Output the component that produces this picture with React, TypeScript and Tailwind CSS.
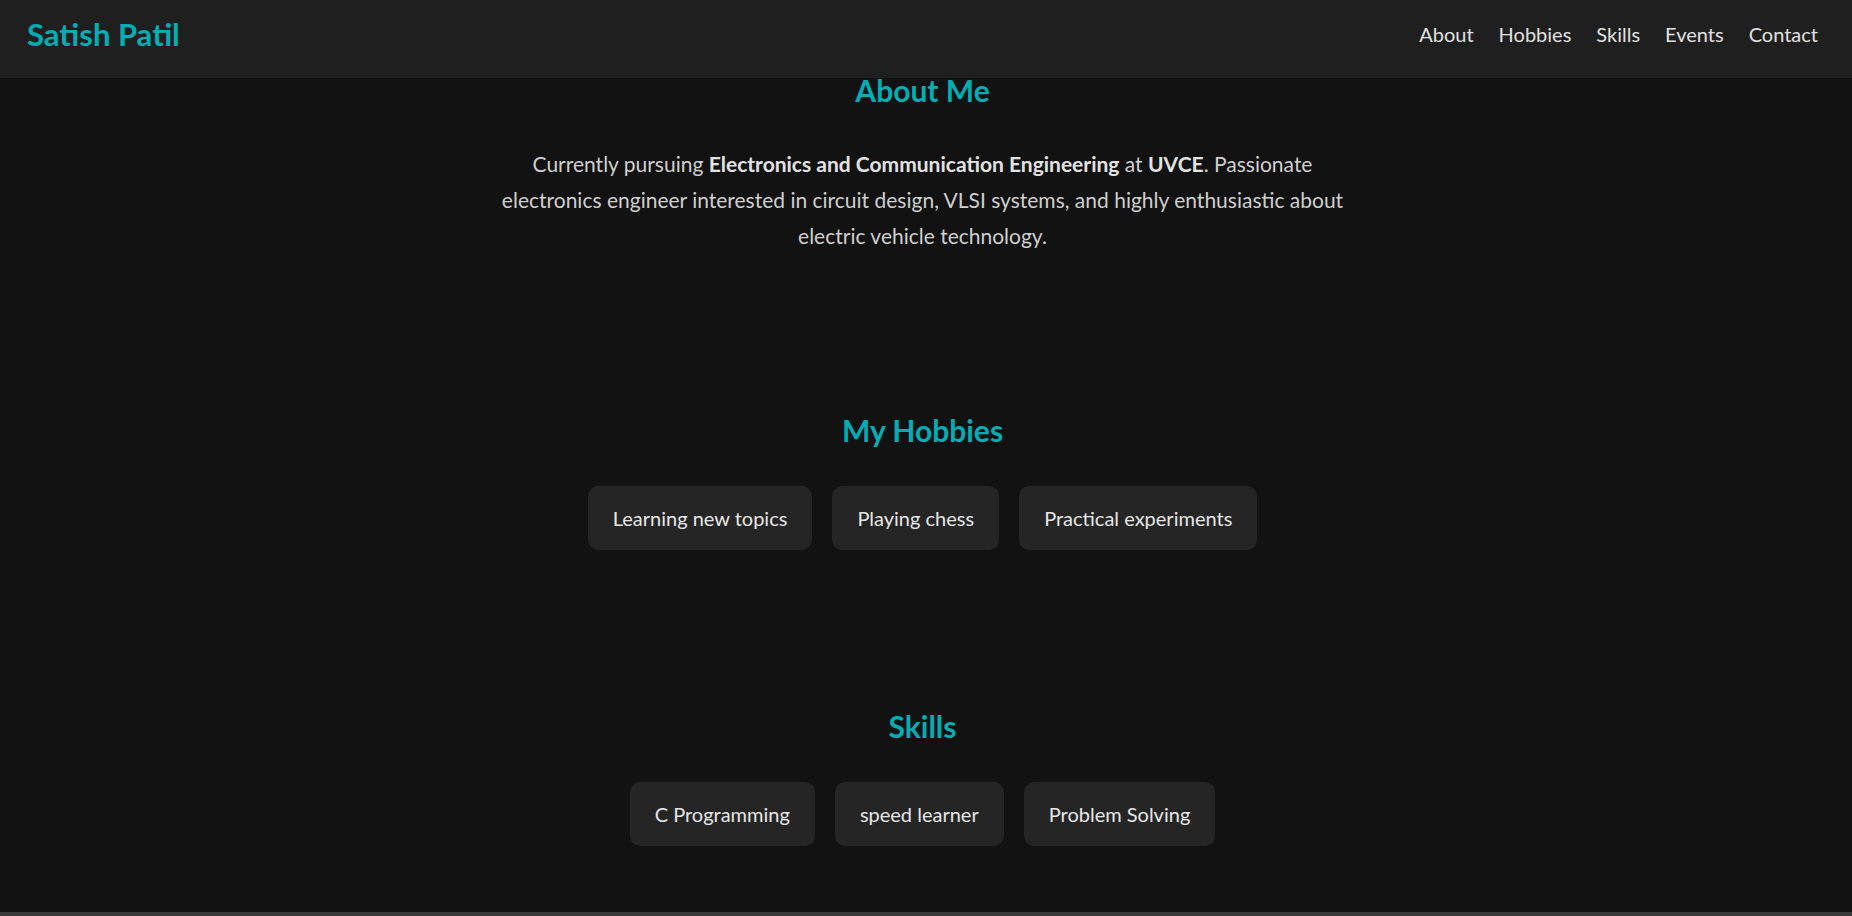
const hobbies = ['Learning new topics', 'Playing chess', 'Practical experiments'];
const skills = ['C Programming', 'speed learner', 'Problem Solving'];
const links = ['About', 'Hobbies', 'Skills', 'Events', 'Contact'];

function Tag({ label }: { label: string }) {
  return (
    <div className="flex h-[64px] items-center rounded-[10px] bg-[#252525] px-[25px] text-[20px] text-[#e6e6e6]">
      {label}
    </div>
  );
}

function Section({ title, children }: { title: string; children: React.ReactNode }) {
  return (
    <section className="flex flex-col items-center">
      <h2 className="mb-[38px] text-[30px] leading-[36px] font-bold text-[#00adb5]">{title}</h2>
      {children}
    </section>
  );
}

export default function App() {
  return (
    <div className="relative h-[916px] overflow-hidden bg-[#121212] font-['Lato','Open_Sans',sans-serif]">
      {/* fixed header over the content */}
      <header className="absolute inset-x-0 top-0 z-10 flex h-[78px] items-center justify-between bg-[#1f1f1f] pr-[34px] pb-[10px] pl-[27px]">
        <span className="text-[31px] leading-none font-bold text-[#00adb5]">Satish Patil</span>
        <nav className="flex gap-[25px] text-[20px] text-[#e0e0e0]">
          {links.map((l) => (
            <a key={l} href={'#' + l.toLowerCase()}>
              {l}
            </a>
          ))}
        </nav>
      </header>

      <main className="flex flex-col gap-[158px] pt-[72px] pr-[7px]">
        <Section title="About Me">
          <p className="max-w-[860px] text-center text-[21px] leading-[36px] text-[#cfcfcf]">
            Currently pursuing <b className="text-[#e2e2e2]">Electronics and Communication Engineering</b> at{' '}
            <b className="text-[#e2e2e2]">UVCE</b>. Passionate electronics engineer interested in circuit design, VLSI
            systems, and highly enthusiastic about electric vehicle technology.
          </p>
        </Section>

        <Section title="My Hobbies">
          <div className="flex gap-[20px]">
            {hobbies.map((h) => (
              <Tag key={h} label={h} />
            ))}
          </div>
        </Section>

        <Section title="Skills">
          <div className="flex gap-[20px]">
            {skills.map((s) => (
              <Tag key={s} label={s} />
            ))}
          </div>
        </Section>
      </main>

      <div className="mt-[66px] h-[80px] bg-[#3a3a3a]" />
    </div>
  );
}
